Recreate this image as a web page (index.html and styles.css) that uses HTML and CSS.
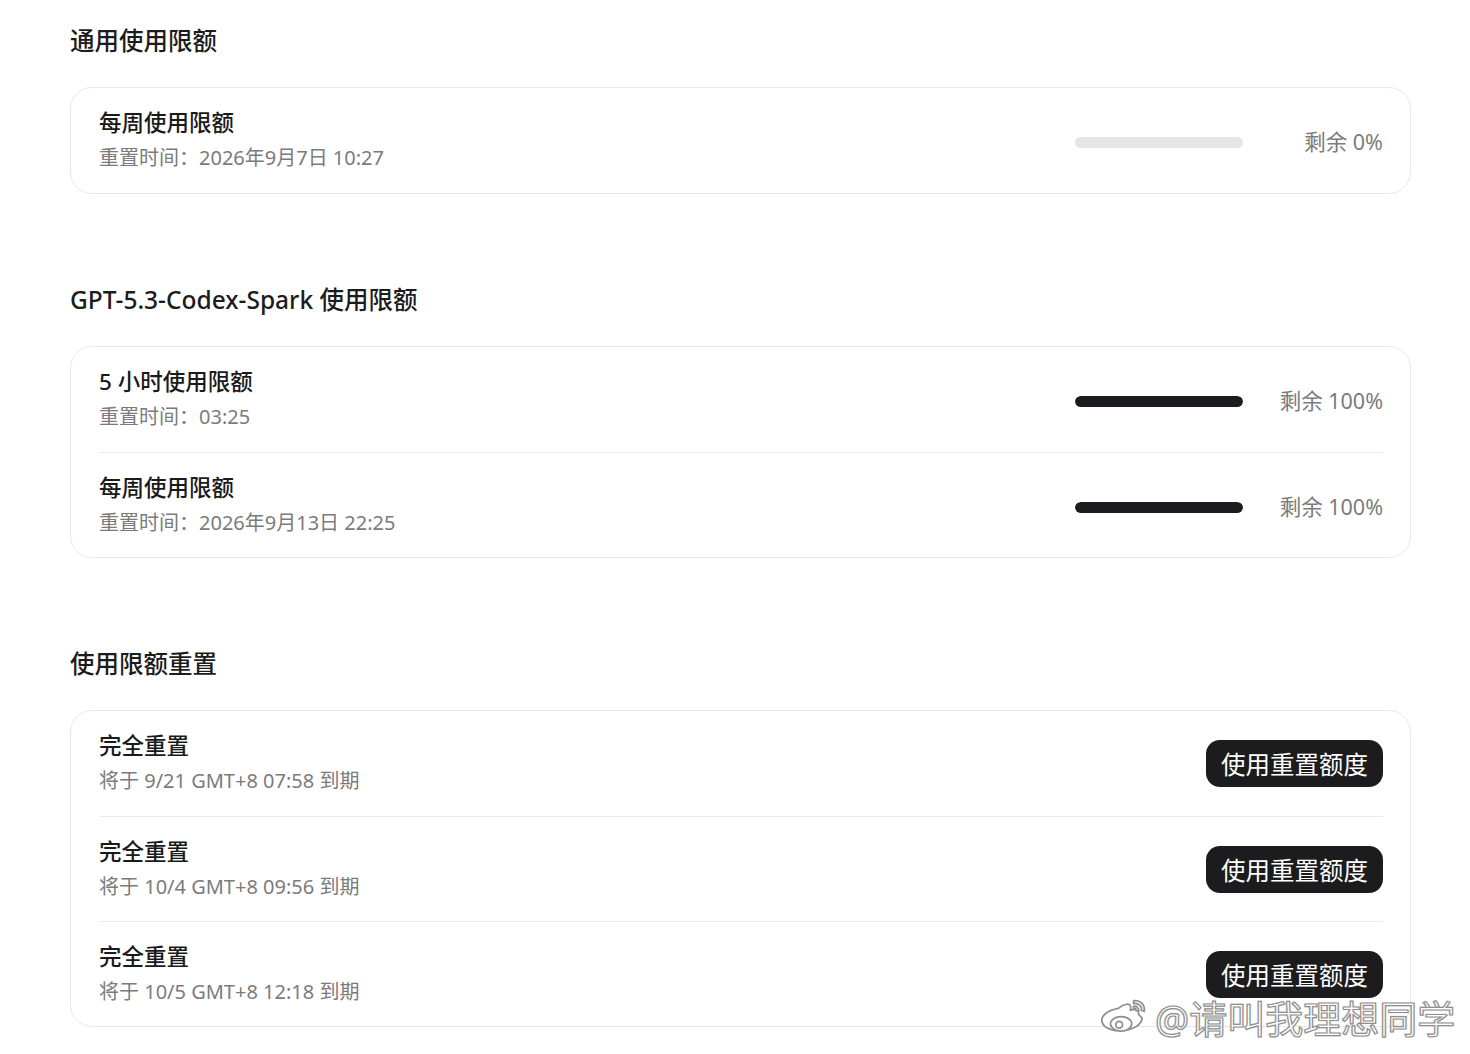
FILE: index.html
```html
<!DOCTYPE html>
<html lang="zh-CN">
<head>
  <meta charset="UTF-8" />
  <title>使用限额</title>
  <link rel="stylesheet" href="styles.css">
</head>
<body>
  <main class="page">
    <section class="section">
      <h2 class="section-title">通用使用限额</h2>
      <div class="card">
        <div class="row">
          <div class="info">
            <div class="title">每周使用限额</div>
            <div class="sub">重置时间：2026年9月7日 10:27</div>
          </div>
          <div class="usage">
            <div class="bar"><div class="fill" style="width: 0%"></div></div>
            <span class="left">剩余 0%</span>
          </div>
        </div>
      </div>
    </section>

    <section class="section">
      <h2 class="section-title">GPT-5.3-Codex-Spark 使用限额</h2>
      <div class="card">
        <div class="row">
          <div class="info">
            <div class="title">5 小时使用限额</div>
            <div class="sub">重置时间：03:25</div>
          </div>
          <div class="usage">
            <div class="bar"><div class="fill" style="width: 100%"></div></div>
            <span class="left">剩余 100%</span>
          </div>
        </div>
        <div class="row">
          <div class="info">
            <div class="title">每周使用限额</div>
            <div class="sub">重置时间：2026年9月13日 22:25</div>
          </div>
          <div class="usage">
            <div class="bar"><div class="fill" style="width: 100%"></div></div>
            <span class="left">剩余 100%</span>
          </div>
        </div>
      </div>
    </section>

    <section class="section">
      <h2 class="section-title">使用限额重置</h2>
      <div class="card">
        <div class="row">
          <div class="info">
            <div class="title">完全重置</div>
            <div class="sub">将于 9/21 GMT+8 07:58 到期</div>
          </div>
          <button class="btn">使用重置额度</button>
        </div>
        <div class="row">
          <div class="info">
            <div class="title">完全重置</div>
            <div class="sub">将于 10/4 GMT+8 09:56 到期</div>
          </div>
          <button class="btn">使用重置额度</button>
        </div>
        <div class="row">
          <div class="info">
            <div class="title">完全重置</div>
            <div class="sub">将于 10/5 GMT+8 12:18 到期</div>
          </div>
          <button class="btn">使用重置额度</button>
        </div>
      </div>
    </section>
  </main>

  <div class="watermark">
    <svg class="weibo" width="54" height="44" viewBox="0 0 56 44">
      <g fill="#fff" stroke="#8f8f8f" stroke-width="1.8">
        <path d="M22 12c6-5 13-6 13-1 0 2-1 3 0 3 5-2 9-1 8 3-0.5 2 1 2 2 3 4 3 0 11-12 14-12 3-27 0-28-9-1-5 6-11 17-13z"/>
        <ellipse cx="25" cy="28" rx="11" ry="7.5"/>
        <circle cx="23" cy="29" r="3.5"/>
        <path d="M38 4c7-1 12 4 11 11l-3-1c1-4-3-8-8-7z"/>
        <path d="M38 10c3-1 6 2 5 5l-2.5-0.6c0.4-1.6-1-3-2.6-2.6z"/>
      </g>
    </svg>
    <span>@请叫我理想同学</span>
  </div>
</body>
</html>
```

FILE: styles.css
```css
* {
  box-sizing: border-box;
}
body {
  margin: 0;
  background: #fff;
  color: #1a1a1a;
  font-family: "Noto Sans", "Noto Sans CJK SC", sans-serif;
}
.page {
  width: 1411px;
  padding: 25px 0 26px 70px;
  display: flex;
  flex-direction: column;
  gap: 90px;
}
.section-title {
  margin: 0 0 30px;
  font-size: 24.5px;
  line-height: 32px;
  font-weight: 500;
  color: #1c1c1c;
}
.card {
  border: 1px solid #e8e8e8;
  border-radius: 22px;
  padding: 0 27px 0 28px;
  background: #fff;
}
.row {
  display: flex;
  align-items: center;
  justify-content: space-between;
  padding: 18px 0;
  min-height: 105px;
}
.row + .row {
  border-top: 1px solid #ebebeb;
}
.info {
  display: flex;
  flex-direction: column;
  gap: 3px;
}
.title {
  font-size: 22.5px;
  line-height: 32px;
  font-weight: 500;
  color: #1a1a1a;
}
.sub {
  font-size: 20px;
  line-height: 32px;
  color: #7b7b7b;
}
.usage {
  display: flex;
  align-items: center;
  gap: 34px;
}
.bar {
  width: 168px;
  height: 11px;
  margin-top: 4px;
  border-radius: 6px;
  background: #e6e6e6;
  overflow: hidden;
}
.fill {
  height: 100%;
  background: #1b1c1f;
  border-radius: 6px;
}
.left {
  width: 106px;
  text-align: right;
  font-size: 21.5px;
  color: #7b7b7b;
}
.btn {
  border: none;
  border-radius: 14px;
  background: #1c1c1e;
  color: #fff;
  font-family: inherit;
  font-size: 24.5px;
  font-weight: 400;
  height: 47px;
  padding: 0 15px;
  cursor: pointer;
}
.watermark {
  position: absolute;
  left: 1097px;
  top: 996px;
  display: flex;
  align-items: center;
  gap: 4px;
  font-size: 38px;
  line-height: 44px;
  color: #fff;
  -webkit-text-stroke: 1.2px #8f8f8f;
  text-shadow: 0 0 2px rgba(0, 0, 0, 0.25);
  pointer-events: none;
}
```
